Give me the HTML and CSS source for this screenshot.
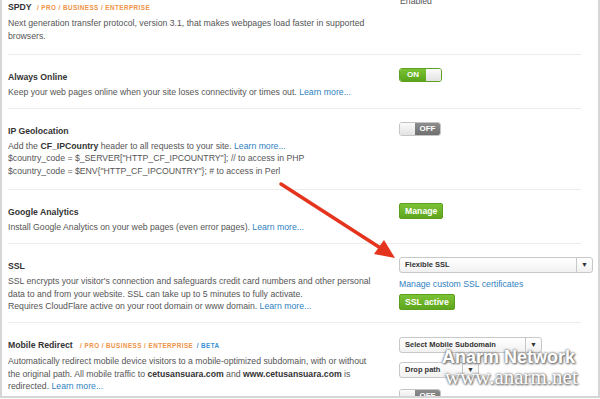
FILE: index.html
```html
<!DOCTYPE html>
<html lang="en">
<head>
    <meta charset="UTF-8">
    <title>CloudFlare Settings</title>
    <link rel="stylesheet" href="styles.css">
</head>
<body>
    <div class="frame">
        <div class="row first">
            <div class="info">
                <h3>SPDY <span class="plans">/ PRO / BUSINESS / ENTERPRISE</span></h3>
                <p>Next generation transfer protocol, version 3.1, that makes webpages load faster in supported browsers.</p>
            </div>
            <div class="control">
                <span class="status">Enabled</span>
            </div>
        </div>

        <div class="row">
            <div class="info">
                <h3>Always Online</h3>
                <p>Keep your web pages online when your site loses connectivity or times out. <a href="#">Learn more...</a></p>
            </div>
            <div class="control">
                <span class="toggle on"><b>ON</b><i></i></span>
            </div>
        </div>

        <div class="row tall">
            <div class="info">
                <h3>IP Geolocation</h3>
                <p>Add the <strong>CF_IPCountry</strong> header to all requests to your site. <a href="#">Learn more...</a><br>
                $country_code = $_SERVER["HTTP_CF_IPCOUNTRY"]; // to access in PHP<br>
                $country_code = $ENV{"HTTP_CF_IPCOUNTRY"}; # to access in Perl</p>
            </div>
            <div class="control">
                <span class="toggle off"><i></i><b>OFF</b></span>
            </div>
        </div>

        <div class="row">
            <div class="info">
                <h3>Google Analytics</h3>
                <p>Install Google Analytics on your web pages (even error pages). <a href="#">Learn more...</a></p>
            </div>
            <div class="control">
                <button class="btn">Manage</button>
            </div>
        </div>

        <div class="row">
            <div class="info">
                <h3>SSL</h3>
                <p>SSL encrypts your visitor's connection and safeguards credit card numbers and other personal data to and from your website. SSL can take up to 5 minutes to fully activate.<br>
                Requires CloudFlare active on your root domain or www domain. <a href="#">Learn more...</a></p>
            </div>
            <div class="control">
                <div class="select wide"><span>Flexible SSL</span><em>&#9660;</em></div>
                <a href="#" class="cert-link">Manage custom SSL certificates</a>
                <button class="btn">SSL active</button>
            </div>
        </div>

        <div class="row last">
            <div class="info">
                <h3>Mobile Redirect <span class="plans wide-gap">/ PRO / BUSINESS / ENTERPRISE</span> <span class="beta">/ BETA</span></h3>
                <p>Automatically redirect mobile device visitors to a mobile-optimized subdomain, with or without the original path. All mobile traffic to <strong>cetusansuara.com</strong> and <strong>www.cetusansuara.com</strong> is redirected. <a href="#">Learn more...</a></p>
            </div>
            <div class="control mobile">
                <div class="select medium"><span>Select Mobile Subdomain</span><em>&#9660;</em></div>
                <div class="select small"><span>Drop path</span><em>&#9660;</em></div>
                <span class="toggle off"><i></i><b>OFF</b></span>
            </div>
        </div>

        <svg class="arrow" width="600" height="399" viewBox="0 0 600 399">
            <line x1="279" y1="184" x2="380" y2="249" stroke="#e5341d" stroke-width="3.5" stroke-linecap="round"/>
            <polygon points="393,258 372,254 382,240" fill="#e5341d"/>
        </svg>

        <div class="watermark">
            <div class="wm-name">Anarm Network</div>
            <div class="wm-url">www.anarm.net</div>
        </div>
    </div>
</body>
</html>
```

FILE: styles.css
```css
body {
    margin: 0;
    font-family: "Liberation Sans", Arial, sans-serif;
    font-size: 8.7px;
    color: #555;
    background: #fff;
}
.frame {
    position: relative;
    width: 596px;
    height: 396px;
    overflow: hidden;
    border-left: 2px solid #d6d6d6;
    border-right: 2px solid #d6d6d6;
    border-bottom: 2px solid #d6d6d6;
}
.row {
    display: grid;
    grid-template-columns: 391px 1fr;
    align-items: start;
    margin: 0 17px 0 6px;
    padding: 15px 0 9.5px;
    border-bottom: 1px solid #ececec;
}
.row.first {
    padding-top: 0;
    padding-bottom: 11.5px;
}
.row.tall {
    padding-bottom: 12px;
}
.row.last {
    border-bottom: none;
}
.info {
    padding-right: 28px;
}
h3 {
    margin: 0 0 2px;
    font-size: 8.7px;
    line-height: 14px;
    color: #333;
}
p {
    margin: 0;
    line-height: 12.5px;
}
a {
    color: #2f7fc1;
    text-decoration: none;
}
strong {
    color: #333;
}
.plans {
    margin-left: 3px;
    font-size: 6.3px;
    letter-spacing: 0.45px;
    color: #ef9245;
}
.plans.wide-gap {
    margin-left: 5px;
}
.beta {
    margin-left: 1px;
    font-size: 6.3px;
    letter-spacing: 0.45px;
    color: #3b8fd2;
}
.control {
    display: flex;
    flex-direction: column;
    align-items: flex-start;
    margin-top: -2px;
}
.first .control {
    margin-top: -5px;
}
.status {
    padding-left: 1px;
    line-height: 12px;
    color: #555;
}
.toggle {
    display: flex;
    height: 14px;
    border: 1px solid #c4c4c4;
    border-radius: 3px;
    overflow: hidden;
    box-sizing: border-box;
}
.toggle b {
    color: #fff;
    font-size: 8px;
    line-height: 12px;
    text-align: center;
}
.toggle i {
    width: 15px;
    background: linear-gradient(#fbfbfb, #e2e2e2);
}
.toggle.on {
    border-color: #5fa021;
}
.toggle.on b {
    width: 26px;
    background: linear-gradient(#78c232, #5aa41c);
}
.toggle.off b {
    width: 25px;
    background: linear-gradient(#8d8d8d, #6f6f6f);
}
.btn {
    font-family: inherit;
    font-size: 8.7px;
    font-weight: bold;
    color: #fff;
    height: 16px;
    padding: 0 5px;
    border: 1px solid #5c9e1e;
    border-radius: 2px;
    background: linear-gradient(#7cc236, #5ea61e);
    line-height: 14px;
}
.select {
    display: flex;
    height: 16px;
    box-sizing: border-box;
    border: 1px solid #c8c8c8;
    border-radius: 3px;
    background: linear-gradient(#fff, #f1f1f1);
    font-size: 7.5px;
    font-weight: bold;
    color: #333;
}
.select span {
    flex: 1;
    padding-left: 5px;
    line-height: 14px;
}
.select em {
    width: 15px;
    border-left: 1px solid #c8c8c8;
    font-style: normal;
    font-size: 7px;
    line-height: 14px;
    text-align: center;
}
.select.wide {
    width: 194px;
}
.select.medium {
    width: 143px;
}
.select.small {
    width: 80px;
}
.cert-link {
    margin: 5px 0 4px;
    line-height: 12px;
}
.mobile {
    gap: 9px;
    margin-top: -1px;
}
.mobile .toggle {
    margin-top: 2px;
}
.arrow {
    position: absolute;
    left: 0;
    top: 0;
}
.watermark {
    position: absolute;
    left: 440px;
    top: 346px;
    color: #fff;
    text-shadow: 0 0 3px #777, 0 0 2px #888, 1px 1px 2px #666;
}
.wm-name {
    font-size: 18px;
    font-weight: bold;
    line-height: 22px;
}
.wm-url {
    font-family: "Liberation Serif", "Times New Roman", serif;
    font-size: 21px;
    line-height: 18px;
    padding-left: 3px;
}
```
